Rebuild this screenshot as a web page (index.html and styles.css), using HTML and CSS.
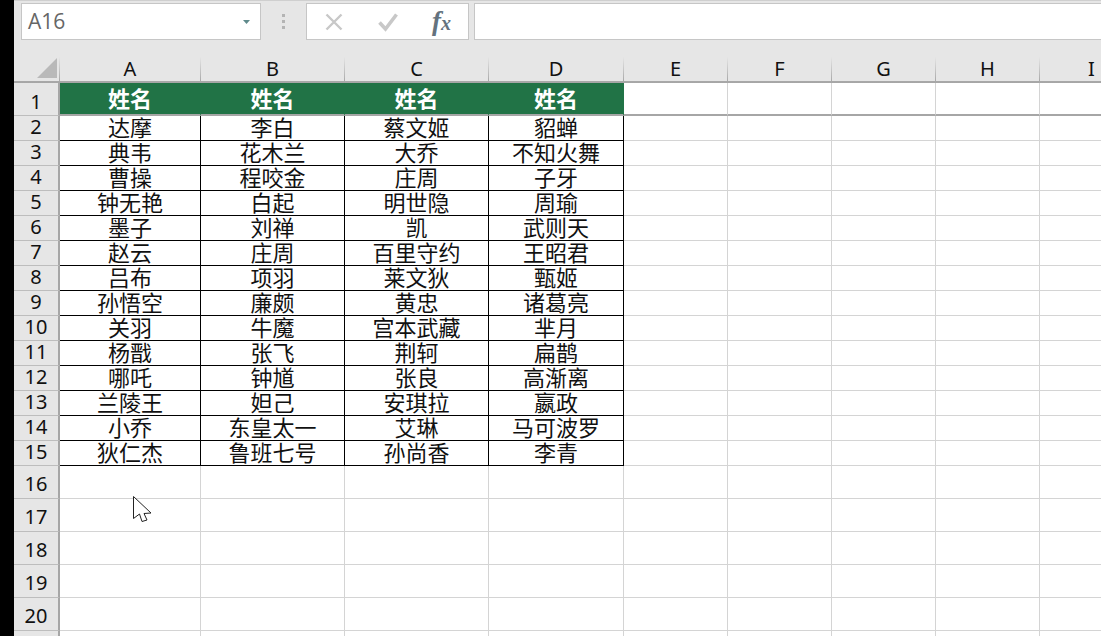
FILE: index.html
```html
<!DOCTYPE html>
<html lang="zh-CN">
<head>
    <meta charset="UTF-8">
    <title>姓名表</title>
    <link rel="stylesheet" href="styles.css">
</head>
<body>
    <div class="edge"></div>
    <div class="app">
        <div class="formula-row">
            <div class="name-box">
                <span>A16</span>
                <svg class="caret" width="7" height="4" viewBox="0 0 7 4"><path d="M0 0h7L3.500 4z" fill="#5f8a8b"/></svg>
            </div>
            <div class="grip"><i></i><i></i><i></i></div>
            <div class="fx-box">
                <svg width="20" height="20" viewBox="0 0 20 20"><path d="M2.500 2.500l15 15M17.500 2.500l-15 15" stroke="#c8c8c8" stroke-width="2.400" fill="none"/></svg>
                <svg width="20" height="20" viewBox="0 0 20 20"><path d="M1.500 10.500l6 6.500L18.500 2.500" stroke="#c8c8c8" stroke-width="3.600" fill="none"/></svg>
                <span class="fx">f<small>x</small></span>
            </div>
            <div class="formula-input"></div>
        </div>
        <table class="sheet">
            <colgroup>
                <col class="col-corner"><col class="col-a"><col class="col-b"><col class="col-c"><col class="col-d">
                <col class="col-e"><col class="col-e"><col class="col-e"><col class="col-e"><col class="col-e">
            </colgroup>
            <tr class="letters">
                <th class="corner"><div class="triangle"></div></th>
                <th>A</th><th>B</th><th>C</th><th>D</th><th>E</th><th>F</th><th>G</th><th>H</th><th>I</th>
            </tr>
            <tr class="title-row">
                <th class="num">1</th>
                <td class="title">姓名</td><td class="title">姓名</td><td class="title">姓名</td><td class="title">姓名</td>
                <td></td><td></td><td></td><td></td><td></td>
            </tr>
            <tr class="data"><th class="num">2</th><td>达摩</td><td>李白</td><td>蔡文姬</td><td>貂蝉</td><td></td><td></td><td></td><td></td><td></td></tr>
            <tr class="data"><th class="num">3</th><td>典韦</td><td>花木兰</td><td>大乔</td><td>不知火舞</td><td></td><td></td><td></td><td></td><td></td></tr>
            <tr class="data"><th class="num">4</th><td>曹操</td><td>程咬金</td><td>庄周</td><td>子牙</td><td></td><td></td><td></td><td></td><td></td></tr>
            <tr class="data"><th class="num">5</th><td>钟无艳</td><td>白起</td><td>明世隐</td><td>周瑜</td><td></td><td></td><td></td><td></td><td></td></tr>
            <tr class="data"><th class="num">6</th><td>墨子</td><td>刘禅</td><td>凯</td><td>武则天</td><td></td><td></td><td></td><td></td><td></td></tr>
            <tr class="data"><th class="num">7</th><td>赵云</td><td>庄周</td><td>百里守约</td><td>王昭君</td><td></td><td></td><td></td><td></td><td></td></tr>
            <tr class="data"><th class="num">8</th><td>吕布</td><td>项羽</td><td>莱文狄</td><td>甄姬</td><td></td><td></td><td></td><td></td><td></td></tr>
            <tr class="data"><th class="num">9</th><td>孙悟空</td><td>廉颇</td><td>黄忠</td><td>诸葛亮</td><td></td><td></td><td></td><td></td><td></td></tr>
            <tr class="data"><th class="num">10</th><td>关羽</td><td>牛魔</td><td>宫本武藏</td><td>芈月</td><td></td><td></td><td></td><td></td><td></td></tr>
            <tr class="data"><th class="num">11</th><td>杨戬</td><td>张飞</td><td>荆轲</td><td>扁鹊</td><td></td><td></td><td></td><td></td><td></td></tr>
            <tr class="data"><th class="num">12</th><td>哪吒</td><td>钟馗</td><td>张良</td><td>高渐离</td><td></td><td></td><td></td><td></td><td></td></tr>
            <tr class="data"><th class="num">13</th><td>兰陵王</td><td>妲己</td><td>安琪拉</td><td>嬴政</td><td></td><td></td><td></td><td></td><td></td></tr>
            <tr class="data"><th class="num">14</th><td>小乔</td><td>东皇太一</td><td>艾琳</td><td>马可波罗</td><td></td><td></td><td></td><td></td><td></td></tr>
            <tr class="data"><th class="num">15</th><td>狄仁杰</td><td>鲁班七号</td><td>孙尚香</td><td>李青</td><td></td><td></td><td></td><td></td><td></td></tr>
            <tr class="blank"><th class="num">16</th><td></td><td></td><td></td><td></td><td></td><td></td><td></td><td></td><td></td></tr>
            <tr class="blank"><th class="num">17</th><td></td><td></td><td></td><td></td><td></td><td></td><td></td><td></td><td></td></tr>
            <tr class="blank"><th class="num">18</th><td></td><td></td><td></td><td></td><td></td><td></td><td></td><td></td><td></td></tr>
            <tr class="blank"><th class="num">19</th><td></td><td></td><td></td><td></td><td></td><td></td><td></td><td></td><td></td></tr>
            <tr class="blank"><th class="num">20</th><td></td><td></td><td></td><td></td><td></td><td></td><td></td><td></td><td></td></tr>
            <tr class="blank"><th class="num"></th><td></td><td></td><td></td><td></td><td></td><td></td><td></td><td></td><td></td></tr>
        </table>
        <svg class="cursor" width="20" height="29" viewBox="0 0 20 29">
            <path d="M1.500 1.500v22l6-4.500 2.500 7.500 5-1.500-3-6.500 7-.5z" fill="#fff" stroke="#222" stroke-width="1"/>
        </svg>
    </div>
</body>
</html>
```

FILE: styles.css
```css
html, body {
    margin: 0;
    height: 100%;
    overflow: hidden;
}
body {
    display: flex;
    background-color: #000;
    font-family: "Noto Sans CJK SC", sans-serif;
    color: #111;
}
.edge {
    width: 14px;
    flex: none;
}
.app {
    position: relative;
    flex: 1;
    min-width: 0;
    background-color: #e6e6e6;
    overflow: hidden;
}

/* formula bar */
.formula-row {
    display: flex;
    height: 55px;
    padding-top: 2px;
    box-sizing: border-box;
    border-top: 1px solid #cfcfcf;
    align-items: flex-start;
}
.name-box {
    display: flex;
    align-items: center;
    justify-content: space-between;
    width: 240px;
    height: 37px;
    margin-left: 7px;
    padding: 0 10px 0 6px;
    box-sizing: border-box;
    background-color: #fff;
    border: 1px solid #c6c6c6;
    font-family: "Open Sans", sans-serif;
    font-size: 21px;
    color: #666;
}
.name-box span {
    margin-top: -1px;
}
.grip {
    display: flex;
    flex-direction: column;
    gap: 3px;
    width: 45px;
    height: 37px;
    align-items: center;
    justify-content: center;
}
.grip i {
    width: 3px;
    height: 3px;
    background-color: #b4b4b4;
}
.fx-box {
    display: flex;
    align-items: center;
    justify-content: space-between;
    width: 163px;
    height: 37px;
    padding: 0 17px 0 17px;
    box-sizing: border-box;
    background-color: #fff;
    border: 1px solid #c6c6c6;
}
.fx {
    font-family: "Liberation Serif", serif;
    font-style: italic;
    font-weight: bold;
    font-size: 27px;
    line-height: 30px;
    color: #64727e;
}
.fx small {
    font-size: 20px;
}
.formula-input {
    flex: 1;
    height: 37px;
    margin-left: 5px;
    box-sizing: border-box;
    background-color: #fff;
    border: 1px solid #c6c6c6;
    border-right: 0;
}

/* sheet */
.sheet {
    table-layout: fixed;
    width: 1129px;
    border-collapse: separate;
    border-spacing: 0;
    background-color: #fff;
}
.col-corner { width: 46px; }
.col-a { width: 141px; }
.col-b, .col-c { width: 144px; }
.col-d { width: 135px; }
.col-e { width: 104px; }

.sheet th, .sheet td {
    padding: 0;
    box-sizing: border-box;
    text-align: center;
    white-space: nowrap;
}
.sheet td {
    border-right: 1px solid #d4d4d4;
    border-bottom: 1px solid #d4d4d4;
    padding-bottom: 4px;
    font-size: 22px;
    line-height: 20px;
    vertical-align: bottom;
}
.letters th {
    height: 28px;
    background-color: #e6e6e6;
    border-bottom: 2px solid #a6a6a6;
    border-right: 1px solid;
    border-image: linear-gradient(#e6e6e6 10%, #a6a6a6) 1;
    font-family: "Noto Sans", sans-serif;
    font-weight: 400;
    font-size: 20px;
    line-height: 24px;
    vertical-align: bottom;
}
.letters .corner {
    border-bottom: 2px solid #a6a6a6;
    vertical-align: bottom;
}
.triangle {
    width: 0;
    height: 0;
    margin: 0 2px 3px auto;
    border-style: solid;
    border-width: 0 0 20px 20px;
    border-color: transparent transparent #b9b9b9 transparent;
}
.sheet .num {
    background-color: #e6e6e6;
    border-right: 2px solid #a6a6a6;
    border-bottom: 1px solid #bdbdbd;
    font-family: "Noto Sans", sans-serif;
    font-weight: 400;
    font-size: 20px;
    line-height: 22px;
    padding-bottom: 2px;
    vertical-align: bottom;
}
.title-row th, .title-row td {
    height: 33px;
    border-bottom: 2px solid #a6a6a6;
}
.sheet .title {
    background-color: #217346;
    border-right-color: #217346;
    color: #fff;
    font-weight: 700;
    line-height: 24px;
    padding-bottom: 5px;
}
.data th, .data td {
    height: 25px;
}
.data td:nth-child(-n+5) {
    border-right-color: #000;
    border-bottom-color: #000;
}
.blank th, .blank td {
    height: 33px;
}
.sheet .blank .num {
    line-height: 28px;
    padding: 4px 0 0;
    vertical-align: middle;
}

.cursor {
    position: absolute;
    left: 118px;
    top: 495px;
}
```
